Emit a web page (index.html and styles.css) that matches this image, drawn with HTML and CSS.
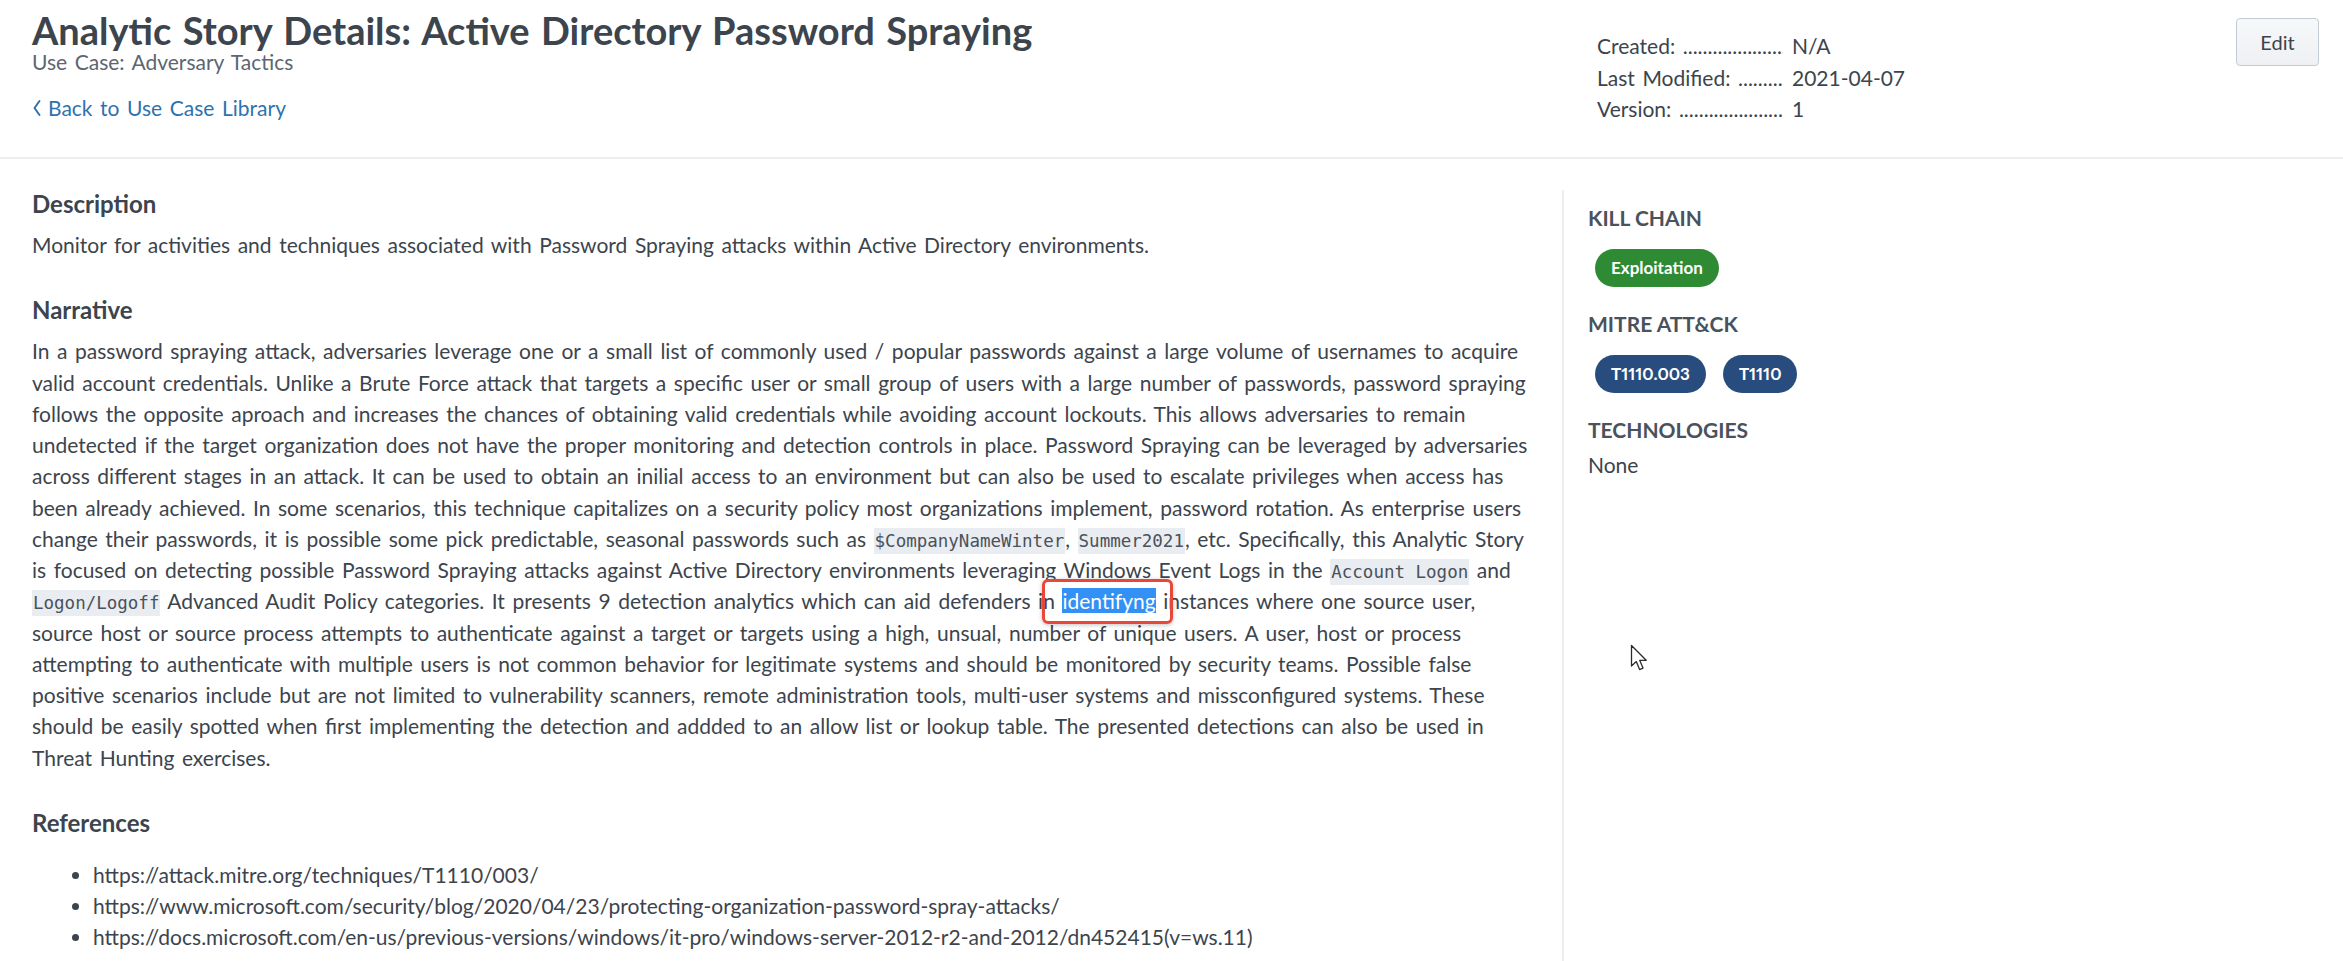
FILE: index.html
```html
<!DOCTYPE html>
<html lang="en">
<head>
<meta charset="utf-8">
<title>Analytic Story Details: Active Directory Password Spraying</title>
<link rel="stylesheet" href="styles.css">
</head>
<body>
<header class="page-header">
  <div class="header-main">
    <h1 class="page-title">Analytic Story Details: Active Directory Password Spraying</h1>
    <div class="subtitle">Use Case: Adversary Tactics</div>
    <a class="back-link" href="#"><svg class="chevron" width="10" height="18" viewBox="0 0 10 18"><path d="M7.5 2 L2.5 9 L7.5 16" fill="none" stroke="currentColor" stroke-width="2" stroke-linecap="round" stroke-linejoin="round"/></svg>Back to Use Case Library</a>
  </div>
  <div class="header-side">
    <dl class="meta">
      <div class="meta-row"><dt>Created:</dt><dd>N/A</dd></div>
      <div class="meta-row"><dt>Last Modified:</dt><dd>2021-04-07</dd></div>
      <div class="meta-row"><dt>Version:</dt><dd>1</dd></div>
    </dl>
    <button class="edit-btn" type="button">Edit</button>
  </div>
</header>

<div class="content">
  <main class="main-col">
    <section class="block">
      <h2 class="block-title">Description</h2>
      <p class="text">Monitor for activities and techniques associated with Password Spraying attacks within Active Directory environments.</p>
    </section>
    <section class="block">
      <h2 class="block-title">Narrative</h2>
      <p class="text narrative">In a password spraying attack, adversaries leverage one or a small list of commonly used / popular passwords against a large volume of usernames to acquire<br>
valid account credentials. Unlike a Brute Force attack that targets a specific user or small group of users with a large number of passwords, password spraying<br>
follows the opposite aproach and increases the chances of obtaining valid credentials while avoiding account lockouts. This allows adversaries to remain<br>
undetected if the target organization does not have the proper monitoring and detection controls in place. Password Spraying can be leveraged by adversaries<br>
across different stages in an attack. It can be used to obtain an inilial access to an environment but can also be used to escalate privileges when access has<br>
been already achieved. In some scenarios, this technique capitalizes on a security policy most organizations implement, password rotation. As enterprise users<br>
change their passwords, it is possible some pick predictable, seasonal passwords such as <code>$CompanyNameWinter</code>, <code>Summer2021</code>, etc. Specifically, this Analytic Story<br>
is focused on detecting possible Password Spraying attacks against Active Directory environments leveraging Windows Event Logs in the <code>Account Logon</code> and<br>
<code>Logon/Logoff</code> Advanced Audit Policy categories. It presents 9 detection analytics which can aid defenders in <span class="marked"><span class="selected">identifyng</span></span> instances where one source user,<br>
source host or source process attempts to authenticate against a target or targets using a high, unsual, number of unique users. A user, host or process<br>
attempting to authenticate with multiple users is not common behavior for legitimate systems and should be monitored by security teams. Possible false<br>
positive scenarios include but are not limited to vulnerability scanners, remote administration tools, multi-user systems and missconfigured systems. These<br>
should be easily spotted when first implementing the detection and addded to an allow list or lookup table. The presented detections can also be used in<br>
Threat Hunting exercises.</p>
    </section>
    <section class="block">
      <h2 class="block-title">References</h2>
      <ul class="refs">
        <li>https://attack.mitre.org/techniques/T1110/003/</li>
        <li>https://www.microsoft.com/security/blog/2020/04/23/protecting-organization-password-spray-attacks/</li>
        <li>https://docs.microsoft.com/en-us/previous-versions/windows/it-pro/windows-server-2012-r2-and-2012/dn452415(v=ws.11)</li>
      </ul>
    </section>
  </main>
  <aside class="side-col">
    <h3 class="side-title">Kill Chain</h3>
    <div class="pills"><span class="pill pill-green">Exploitation</span></div>
    <h3 class="side-title">Mitre ATT&amp;CK</h3>
    <div class="pills"><span class="pill pill-blue">T1110.003</span><span class="pill pill-blue">T1110</span></div>
    <h3 class="side-title">Technologies</h3>
    <div class="side-text">None</div>
  </aside>
</div>

<svg class="cursor" width="20" height="30" viewBox="0 0 20 30"><path d="M1.5 1.5 L1.5 22 L6.3 17.6 L9.6 25.6 L13 24.1 L9.7 16.3 L16.2 16.3 Z" fill="#fff" stroke="#2b2b2b" stroke-width="1.3" stroke-linejoin="round"/></svg>
</body>
</html>
```
FILE: styles.css
```css
* { box-sizing: border-box; }
html, body { margin: 0; padding: 0; background: #ffffff; }
body {
  font-family: Lato, "Open Sans", Arial, sans-serif;
  color: #3c444d;
  font-size: 21px;
  line-height: 31.25px;
  word-spacing: 2.2px;
  min-height: 961px;
  position: relative;
}

.page-header {
  display: grid;
  grid-template-columns: 1564px 1fr;
  height: 159px;
  border-bottom: 2px solid #eceef1;
}
.header-main { padding: 9px 0 0 32px; }
.page-title {
  margin: 0;
  font-size: 38px;
  line-height: 42px;
  font-weight: 700;
  color: #3c444d;
}
.subtitle {
  font-size: 21px;
  line-height: 26px;
  color: #5c6670;
  margin-top: -2px;
}
.back-link {
  display: inline-flex;
  align-items: center;
  gap: 6px;
  margin-top: 20px;
  color: #2e72ae;
  text-decoration: none;
  font-size: 21px;
  line-height: 26px;
}
.chevron { display: block; }

.header-side {
  display: flex;
  justify-content: space-between;
  align-items: flex-start;
  padding: 18px 24px 0 33px;
}
.meta { margin: 12px 0 0; }
.meta-row { display: flex; height: 31.5px; }
.meta-row dt {
  width: 186px;
  overflow: hidden;
  white-space: nowrap;
  color: #3c444d;
}
.meta-row dt::after {
  content: " ..................................................";
}
.meta-row dd { margin: 0 0 0 9px; }

.edit-btn {
  width: 83px;
  height: 48px;
  font-family: inherit;
  font-size: 20px;
  color: #3c444d;
  background: linear-gradient(#f7f8fa, #eef0f3);
  border: 1.5px solid #c3cbd4;
  border-radius: 4px;
  padding: 0;
}

.content {
  display: grid;
  grid-template-columns: 1564px 1fr;
  margin-top: 31px;
}
.main-col {
  padding: 0 6px 40px 32px;
  border-right: 2px solid #eceef1;
  min-height: 771px;
}
.block + .block { margin-top: 36px; }
.block-title {
  margin: 0 0 11px;
  font-size: 24px;
  line-height: 28px;
  font-weight: 700;
  color: #3c444d;
  word-spacing: 0;
}
.text { margin: 0; }
.narrative { white-space: nowrap; }

code {
  font-family: "DejaVu Sans Mono", "Liberation Mono", monospace;
  font-size: 17.5px;
  line-height: 1;
  background: #e9ecf0;
  color: #4a525b;
  padding: 3px 1px;
  word-spacing: 0;
}

.marked { position: relative; }
.marked::after {
  content: "";
  position: absolute;
  left: -20px;
  top: -9px;
  right: -17px;
  bottom: -11px;
  border: 3px solid #e8473a;
  border-radius: 6px;
  box-shadow: 0 1px 4px rgba(0,0,0,0.25);
}
.selected {
  background: #3390f5;
  color: #ffffff;
}

.refs {
  margin: 22px 0 0;
  padding-left: 61px;
}
.refs li { line-height: 31.25px; }

.side-col { padding: 14px 24px 0 24px; }
.side-title {
  margin: 0;
  font-size: 21px;
  line-height: 28px;
  font-weight: 700;
  text-transform: uppercase;
  color: #4a525b;
  word-spacing: 0;
}
.pills {
  display: flex;
  gap: 17px;
  margin: 17px 0 23px 7px;
}
.pill {
  display: inline-flex;
  align-items: center;
  height: 38px;
  padding: 0 16px;
  border-radius: 19px;
  color: #ffffff;
  font-size: 17px;
  font-weight: 700;
  font-variant-numeric: proportional-nums;
  word-spacing: 0;
}
.pill-green { background: #2f8a34; }
.pill-blue { background: #294c7e; }
.side-text { margin-top: 5px; }

.cursor {
  position: absolute;
  left: 1630px;
  top: 644px;
}
```
